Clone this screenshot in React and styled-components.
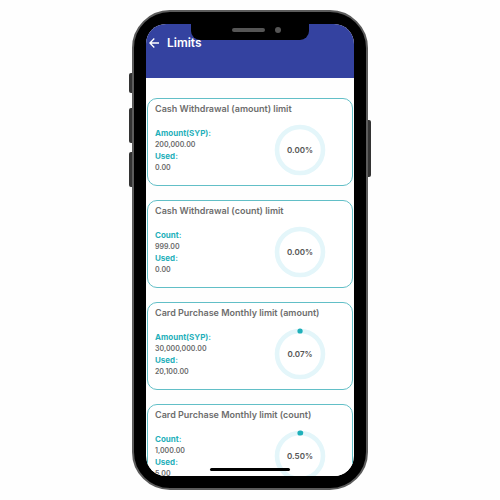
import React from "react";
import styled, { createGlobalStyle } from "styled-components";

const GlobalStyle = createGlobalStyle`
  * { box-sizing: border-box; }
  body { margin: 0; background: #fefefe; font-family: Inter, "Liberation Sans", sans-serif; }
`;

const Stage = styled.div`
  height: 100vh;
  min-height: 320px;
  padding: 10px;
  display: flex;
  justify-content: center;
`;

const Phone = styled.div`
  position: relative;
  width: 100%;
  max-width: 236px;
  padding: 12px;
  display: flex;
  background: #000;
  border: 2px solid #5c5c5c;
  border-radius: 38px;
`;

const SideButton = styled.span`
  position: absolute;
  ${(p) => p.$side}: -5px;
  top: ${(p) => p.$top}px;
  width: 3px;
  height: ${(p) => p.$length}px;
  background: #333;
  border-radius: ${(p) => (p.$side === "left" ? "2px 0 0 2px" : "0 2px 2px 0")};
`;

const Notch = styled.div`
  position: absolute;
  z-index: 1;
  top: 12px;
  left: 50%;
  transform: translateX(-50%);
  width: 118px;
  height: 16px;
  background: #000;
  border-radius: 0 0 9px 9px;
`;

const Speaker = styled.span`
  position: absolute;
  left: 41px;
  top: 4px;
  width: 33px;
  height: 4px;
  border-radius: 2px;
  background: #555;
`;

const Camera = styled.span`
  position: absolute;
  left: 84px;
  top: 3px;
  width: 6px;
  height: 6px;
  border-radius: 50%;
  background: #555;
`;

const HomeIndicator = styled.span`
  position: absolute;
  bottom: 17px;
  left: 50%;
  transform: translateX(-50%);
  width: 80px;
  height: 3px;
  border-radius: 2px;
  background: #000;
`;

const Screen = styled.div`
  flex: 1;
  min-width: 0;
  display: flex;
  flex-direction: column;
  overflow: hidden;
  background: #fefefe;
  border-radius: 20px;
`;

const Header = styled.header`
  flex: none;
  height: 54px;
  padding: 12px 2px 0;
  display: flex;
  align-items: flex-start;
  gap: 7px;
  background: #3442a0;
  color: #fff;
`;

const BackButton = styled.button`
  display: flex;
  padding: 1px;
  border: 0;
  background: none;
  color: inherit;
`;

const Title = styled.h1`
  position: relative;
  z-index: 2;
  margin: 0;
  font-size: 12px;
  line-height: 14px;
  font-weight: 600;
`;

const LimitList = styled.main`
  flex: 1;
  min-height: 0;
  overflow: hidden;
  padding: 20px 1px 0;
  display: flex;
  flex-direction: column;
  gap: 14px;
`;

const Card = styled.section`
  flex: none;
  height: 88px;
  padding: 4px 7px;
  background: #fff;
  border: 1px solid #62bfc7;
  border-radius: 10px;
`;

const CardTitle = styled.h2`
  margin: 0;
  font-size: 9px;
  line-height: 12px;
  font-weight: 600;
  color: #6d6d6d;
  white-space: nowrap;
`;

const CardBody = styled.div`
  display: flex;
  justify-content: space-between;
  padding-right: 19px;
`;

const Facts = styled.dl`
  margin: 0;
  padding-top: 12px;
`;

const FactLabel = styled.dt`
  font-size: 8px;
  line-height: 12px;
  font-weight: 700;
  color: #1fb0ba;
`;

const FactValue = styled.dd`
  margin: 0;
  font-size: 7px;
  line-height: 11px;
  font-weight: 600;
  color: #6a6a6a;
`;

const Gauge = styled.div`
  display: grid;
  place-items: center;
  margin-top: 9px;
  width: 52px;
  height: 52px;
  > * { grid-area: 1 / 1; }
`;

const Percent = styled.span`
  font-size: 8px;
  line-height: 12px;
  font-weight: 600;
  color: #555;
`;

const limits = [
  { title: "Cash Withdrawal (amount) limit", label: "Amount(SYP):", total: "200,000.00", used: "0.00", percent: "0.00%" },
  { title: "Cash Withdrawal (count) limit", label: "Count:", total: "999.00", used: "0.00", percent: "0.00%" },
  { title: "Card Purchase Monthly limit (amount)", label: "Amount(SYP):", total: "30,000,000.00", used: "20,100.00", percent: "0.07%" },
  { title: "Card Purchase Monthly limit (count)", label: "Count:", total: "1,000.00", used: "5.00", percent: "0.50%" },
];

function Ring({ percent }) {
  const value = parseFloat(percent);
  return (
    <svg width="52" height="52" viewBox="0 0 52 52" fill="none" strokeWidth="4.6" aria-hidden="true">
      <circle cx="26" cy="26" r="23" stroke="#e4f6fa" />
      {value > 0 && (
        <path
          d="M26 3A23 23 0 0 1 49 26A23 23 0 0 1 26 49A23 23 0 0 1 3 26A23 23 0 0 1 26 3"
          pathLength="100"
          strokeDasharray={`${value} 200`}
          strokeLinecap="round"
          strokeWidth="5.2"
          stroke="#1fb0ba"
        />
      )}
    </svg>
  );
}

function LimitCard({ title, label, total, used, percent }) {
  return (
    <Card>
      <CardTitle>{title}</CardTitle>
      <CardBody>
        <Facts>
          <FactLabel>{label}</FactLabel>
          <FactValue>{total}</FactValue>
          <FactLabel>Used:</FactLabel>
          <FactValue>{used}</FactValue>
        </Facts>
        <Gauge>
          <Ring percent={percent} />
          <Percent>{percent}</Percent>
        </Gauge>
      </CardBody>
    </Card>
  );
}

export default function App() {
  return (
    <Stage>
      <GlobalStyle />
      <Phone>
        <SideButton $side="left" $top={61} $length={20} />
        <SideButton $side="left" $top={96} $length={35} />
        <SideButton $side="left" $top={140} $length={35} />
        <SideButton $side="right" $top={108} $length={57} />
        <Notch>
          <Speaker />
          <Camera />
        </Notch>
        <Screen>
          <Header>
            <BackButton type="button" aria-label="Back">
              <svg width="10" height="12" viewBox="0 0 10 12" fill="none" stroke="currentColor" strokeWidth="1.3">
                <path d="M10 6H1M5.3 1.5L0.9 6L5.3 10.5" />
              </svg>
            </BackButton>
            <Title>Limits</Title>
          </Header>
          <LimitList>
            {limits.map((limit) => (
              <LimitCard key={limit.title} {...limit} />
            ))}
          </LimitList>
        </Screen>
        <HomeIndicator />
      </Phone>
    </Stage>
  );
}
